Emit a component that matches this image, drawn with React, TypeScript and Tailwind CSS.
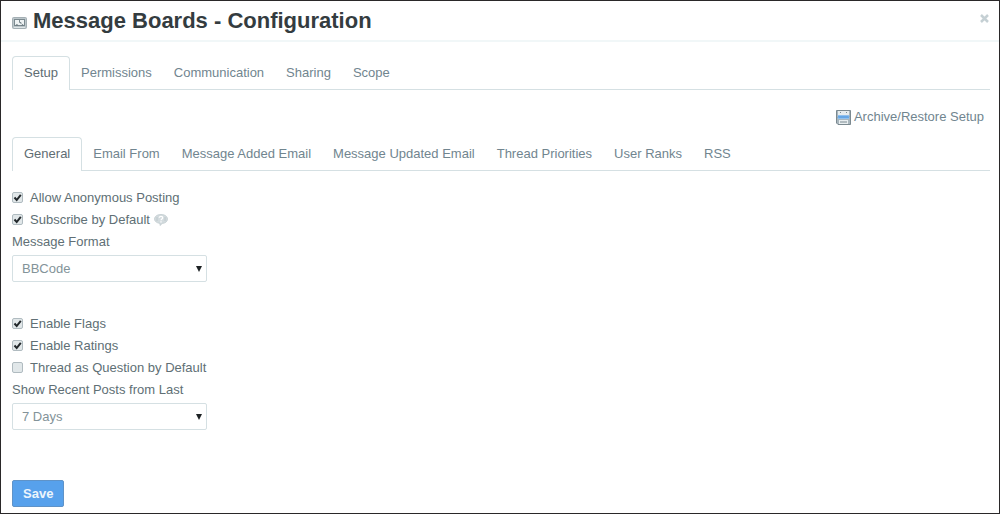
import { useState } from 'react';

const mainTabs = ['Setup', 'Permissions', 'Communication', 'Sharing', 'Scope'];
const setupTabs = [
  'General',
  'Email From',
  'Message Added Email',
  'Message Updated Email',
  'Thread Priorities',
  'User Ranks',
  'RSS',
];

function BoardIcon() {
  return (
    <svg className="mt-1 h-3 w-[15px] shrink-0" viewBox="0 0 15 12" aria-hidden="true">
      <rect x="0.5" y="0.5" width="14" height="11" rx="1" fill="#bcc6ca" stroke="#a4afb4" />
      <rect x="2.5" y="2.5" width="10" height="6" fill="#eef2f3" stroke="#7b898f" />
      <path d="M7.500 3v2.500H9V7" fill="none" stroke="#7b898f" />
      <path d="M3 8.500l2-1.500 1.500 1.500M9 8.500l1.500-1.500L12 8.500" fill="#66757b" />
      <path d="M2 10.500h11" stroke="#dfe5e7" />
    </svg>
  );
}

function DiskIcon() {
  return (
    <svg className="h-[15px] w-[15px] shrink-0" viewBox="0 0 15 15" aria-hidden="true">
      <path d="M.5.5h14v14H2L.5 13z" fill="#a9b6bd" stroke="#7b8990" />
      <rect x="2" y="1" width="11" height="5" fill="#e6ecee" />
      <path d="M4 2.500h1M10 2.500h1" stroke="#7b8990" />
      <rect x="2" y="5" width="11" height="4" fill="#8fc0ee" />
      <path d="M2 7.500l1-1 1 1 1-1 1 1 1-1 1 1 1-1 1 1 1-1 1 1 1-1" fill="none" stroke="#2f86dc" />
      <rect x="3" y="10" width="9" height="4" fill="#e9eef0" />
      <path d="M4 12h7" stroke="#7b8990" />
    </svg>
  );
}

function HelpIcon() {
  return (
    <svg className="h-3 w-[14px]" viewBox="0 0 14 12" role="img" aria-label="Help">
      <path
        d="M7 .5c3.800 0 6.500 1.900 6.500 4.600 0 2.400-2.200 4.100-5.300 4.400L6 11.500V9.400C2.800 9 .5 7.400.5 5.100.5 2.400 3.200.5 7 .5z"
        fill="#d3dbde"
        stroke="#c1cbcf"
        strokeWidth="0.8"
      />
      <path d="M5.300 3.800c0-2 3.400-2 3.400 0C8.700 5 7 5 7 6.300M7 7.300v1.200" fill="none" stroke="#fff" strokeWidth="1.300" />
      <path d="M3 3.500v3M11 3.500v3" stroke="#a9b5ba" strokeDasharray="1 1" />
    </svg>
  );
}

function Tabs({ label, items }: { label: string; items: string[] }) {
  const [active, setActive] = useState(items[0]);
  return (
    <div role="tablist" aria-label={label} className="flex border-b border-[#d5e0e3]">
      {items.map((item) => (
        <button
          key={item}
          type="button"
          role="tab"
          aria-selected={item === active}
          onClick={() => setActive(item)}
          className={
            item === active
              ? '-mb-px rounded-t border border-b-0 border-[#d5e0e3] bg-white px-[11px] pt-[7px] pb-2 leading-[18px] whitespace-nowrap text-[#5f6d73]'
              : 'border border-b-0 border-transparent px-[10px] py-[7px] leading-[18px] whitespace-nowrap text-[#71858f]'
          }
        >
          {item}
        </button>
      ))}
    </div>
  );
}

function CheckField({ label, checked = false, help = false }: { label: string; checked?: boolean; help?: boolean }) {
  return (
    <div className="flex h-[22px] items-center gap-1">
      <label className="flex items-center gap-[7px]">
        <span className="mb-0.5 grid">
          <input
            type="checkbox"
            defaultChecked={checked}
            className="peer col-start-1 row-start-1 h-[11px] w-[11px] appearance-none rounded-xs border border-[#b0bbc0] bg-[#e1e7e9]"
          />
          <svg
            className="pointer-events-none invisible col-start-1 row-start-1 h-[11px] w-[11px] peer-checked:visible"
            viewBox="0 0 11 11"
            aria-hidden="true"
          >
            <path d="M2.500 5.500l2.200 2.500L8.800 2.800" fill="none" stroke="#22282b" strokeWidth="2" />
          </svg>
        </span>
        {label}
      </label>
      {help && <HelpIcon />}
    </div>
  );
}

function SelectField({ id, label, options }: { id: string; label: string; options: string[] }) {
  return (
    <div className="flex flex-col items-start">
      <label htmlFor={id} className="leading-[22px]">
        {label}
      </label>
      <div className="mt-0.5 grid w-[195px] items-center">
        <select
          id={id}
          className="col-start-1 row-start-1 h-[27px] w-full appearance-none rounded-xs border border-[#d5e0e3] bg-white pr-6 pl-[9px] text-[13px] text-[#839399]"
        >
          {options.map((option) => (
            <option key={option}>{option}</option>
          ))}
        </select>
        <svg
          className="pointer-events-none col-start-1 row-start-1 mr-[5px] h-1.5 w-1.5 justify-self-end"
          viewBox="0 0 6 6"
          aria-hidden="true"
        >
          <path d="M0 0h6L3 6z" fill="#1d2224" />
        </svg>
      </div>
    </div>
  );
}

export default function App() {
  return (
    <main className="min-h-screen border border-[#2a2829] bg-white font-['Liberation_Sans',Arial,sans-serif] text-[13px] text-[#606f75]">
      <header className="flex h-[41px] items-center justify-between border-b-2 border-[#f1f7f8] pr-[10px] pl-[11px]">
        <div className="flex items-center gap-[6px]">
          <BoardIcon />
          <h1 className="text-[22px] leading-[26px] font-bold text-[#343c3f]">Message Boards - Configuration</h1>
        </div>
        <button type="button" aria-label="Close" className="mb-1 text-[#c5d0d4]">
          <svg className="h-[9px] w-[9px]" viewBox="0 0 9 9" aria-hidden="true">
            <path d="M1 1l7 7M8 1L1 8" stroke="currentColor" strokeWidth="2.500" />
          </svg>
        </button>
      </header>

      <div className="pt-[14px] pr-[9px] pb-[5px] pl-[11px]">
        <Tabs label="Configuration sections" items={mainTabs} />

        <div className="flex h-[47px] items-center justify-end pt-[7px] pr-[6px]">
          <a href="#archive" className="flex items-center gap-[3px] text-[#71858f]">
            <DiskIcon />
            Archive/Restore Setup
          </a>
        </div>

        <Tabs label="Setup sections" items={setupTabs} />

        <form className="pt-4" onSubmit={(event) => event.preventDefault()}>
          <CheckField label="Allow Anonymous Posting" checked />
          <CheckField label="Subscribe by Default" checked help />
          <SelectField id="message-format" label="Message Format" options={['BBCode', 'HTML']} />

          <div className="pt-[31px]">
            <CheckField label="Enable Flags" checked />
            <CheckField label="Enable Ratings" checked />
            <CheckField label="Thread as Question by Default" />
            <SelectField
              id="recent-posts"
              label="Show Recent Posts from Last"
              options={['7 Days', '24 Hours', '30 Days', '365 Days']}
            />
          </div>

          <button
            type="submit"
            className="mt-[50px] block h-[27px] rounded-xs border border-[#5f93c8] bg-[#57a1ec] px-[10px] font-bold text-[#edf5fc]"
          >
            Save
          </button>
        </form>
      </div>
    </main>
  );
}
